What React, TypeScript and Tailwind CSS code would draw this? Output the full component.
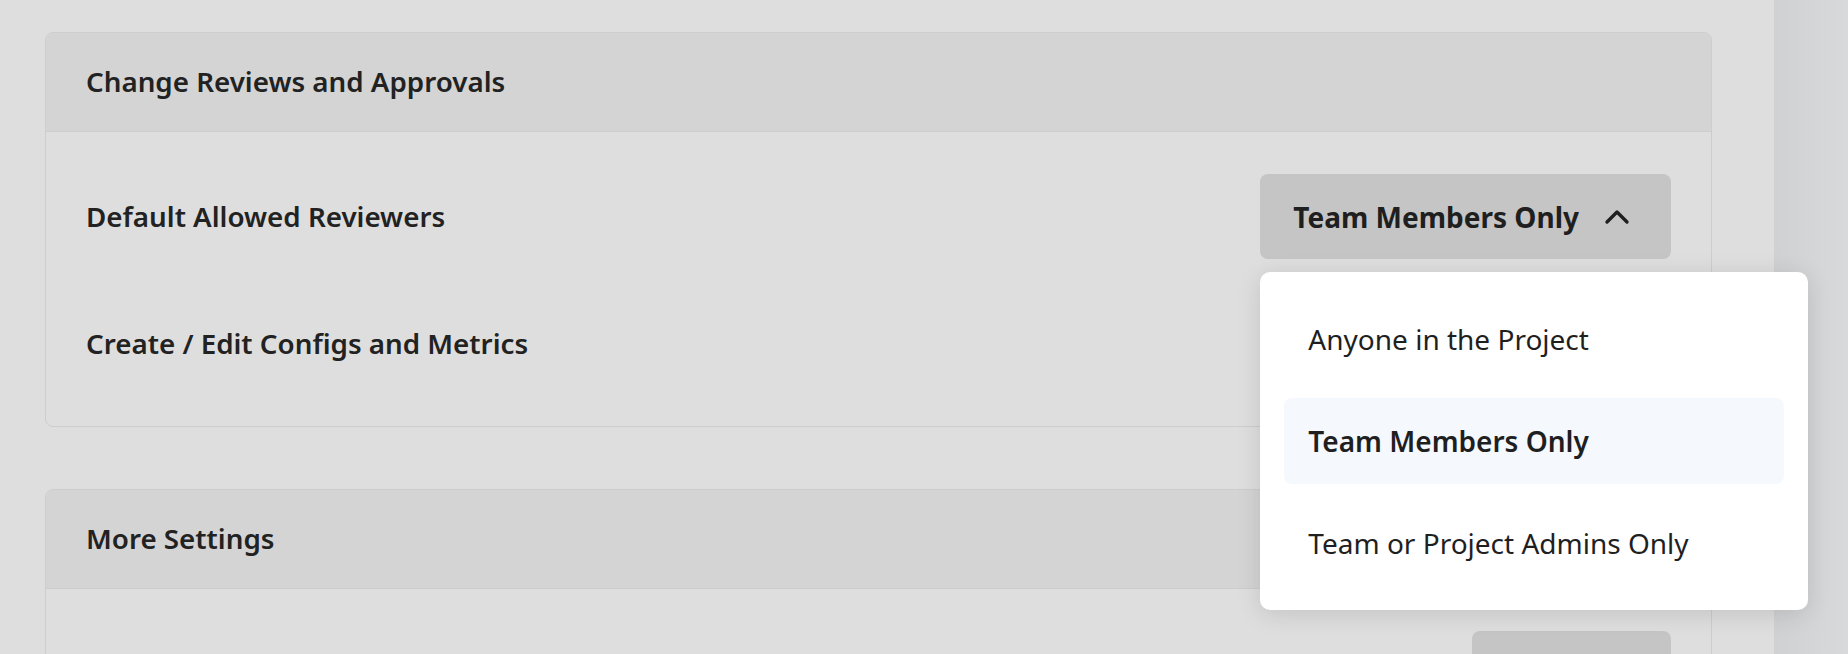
import { ChevronUp } from "lucide-react";

const options = [
  { label: "Anyone in the Project", selected: false },
  { label: "Team Members Only", selected: true },
  { label: "Team or Project Admins Only", selected: false },
];

const ReviewerSelect = () => {
  return (
    <div className="relative">
      <button className="flex h-[85px] items-center gap-[18px] rounded-lg bg-[#c5c5c5] pl-[33px] pr-[34px] text-[28px] font-bold text-[#1f1f1f]">
        <span>Team Members Only</span>
        <ChevronUp size={40} strokeWidth={2} className="text-[#1f1f1f]" />
      </button>
      <div className="absolute left-0 top-full z-10 mt-[13px] flex w-[548px] flex-col gap-4 rounded-[10px] bg-white p-6 shadow-[0_4px_24px_rgba(0,0,0,0.12)]">
        {options.map((option) => (
          <div
            key={option.label}
            className={
              option.selected
                ? "flex h-[86px] items-center rounded-lg bg-[#f5f8fd] px-6 text-[28px] font-semibold text-[#1f1f1f]"
                : "flex h-[86px] items-center rounded-lg px-6 text-[28px] font-normal text-[#1f1f1f]"
            }
          >
            {option.label}
          </div>
        ))}
      </div>
    </div>
  );
};

const SettingRow = ({ label, children }: { label: string; children?: any }) => {
  return (
    <div className="flex h-[85px] items-center justify-between">
      <span className="text-[27.75px] font-semibold text-[#222]">{label}</span>
      {children}
    </div>
  );
};

const Panel = ({ title, children }: { title: string; children: any }) => {
  return (
    <div className="rounded-lg border border-[#cdcdcd]">
      <div className="flex h-[99px] items-center rounded-t-lg border-b border-[#cdcdcd] bg-[#d4d4d4] px-10">
        <h2 className="text-[27.75px] font-semibold text-[#222]">{title}</h2>
      </div>
      <div className="flex flex-col gap-[42px] px-10 pb-10 pt-[42px]">{children}</div>
    </div>
  );
};

export default function App() {
  return (
    <div
      className="flex h-[654px] w-full overflow-hidden bg-[#dedede]"
      style={{ fontFamily: '"Noto Sans", "Open Sans", sans-serif' }}
    >
      <div className="flex flex-1 flex-col gap-[62px] pl-[45px] pr-[62px] pt-[32px]">
        <Panel title="Change Reviews and Approvals">
          <SettingRow label="Default Allowed Reviewers">
            <ReviewerSelect />
          </SettingRow>
          <SettingRow label="Create / Edit Configs and Metrics">
            <div className="h-[85px] w-[200px] rounded-lg bg-[#c5c5c5]" />
          </SettingRow>
        </Panel>
        <Panel title="More Settings">
          <SettingRow label="">
            <div className="h-[85px] w-[199px] rounded-lg bg-[#c5c5c5]" />
          </SettingRow>
        </Panel>
      </div>
      <div className="w-[74px] shrink-0 bg-gradient-to-r from-[#d0d1d3] to-[#d8d9db]" />
    </div>
  );
}
